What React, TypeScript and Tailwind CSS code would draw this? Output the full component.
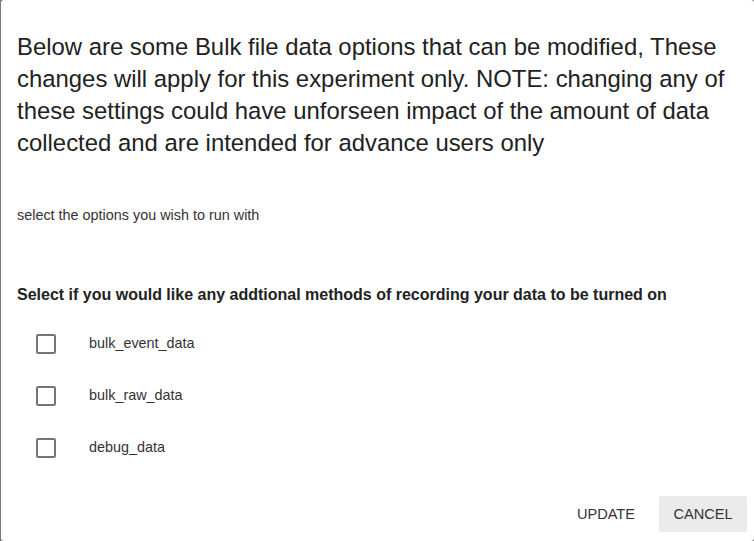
const options = ["bulk_event_data", "bulk_raw_data", "debug_data"];

export default function App() {
  return (
    <div className="h-[541px] w-[754px] overflow-hidden bg-[#7a7a7a] pl-px font-['Liberation_Sans',Arial,sans-serif]">
      <div className="flex h-full flex-col rounded-[3px] bg-white text-[#222]">
        <div className="px-4 pt-[31px]">
          <p className="text-[23.9px] leading-8">
            Below are some Bulk file data options that can be modified, These
            changes will apply for this experiment only. NOTE: changing any of
            these settings could have unforseen impact of the amount of data
            collected and are intended for advance users only
          </p>
        </div>

        <div className="px-4 pt-[46px] text-[14.4px] leading-5 text-[#333]">
          select the options you wish to run with
        </div>

        <div className="px-4 pt-[60px] text-[16px] leading-5 font-bold text-[#222]">
          Select if you would like any addtional methods of recording your data
          to be turned on
        </div>

        <div className="flex flex-col px-[35px] pt-[13px]">
          {options.map((o) => (
            <label key={o} className="flex h-[52px] items-center">
              <span className="h-5 w-5 rounded-[2px] border-2 border-[#747474]" />
              <span className="ml-[33px] text-[14.4px] text-[#333]">{o}</span>
            </label>
          ))}
        </div>

        <div className="mt-auto flex justify-end gap-2 px-[7px] pb-[9px]">
          <button className="h-9 rounded-[2px] px-4 pt-px text-[14.6px] text-[#333]">
            UPDATE
          </button>
          <button className="h-9 w-[88px] rounded-[2px] bg-[#ebebeb] pt-px text-[14.6px] text-[#333]">
            CANCEL
          </button>
        </div>
      </div>
    </div>
  );
}
